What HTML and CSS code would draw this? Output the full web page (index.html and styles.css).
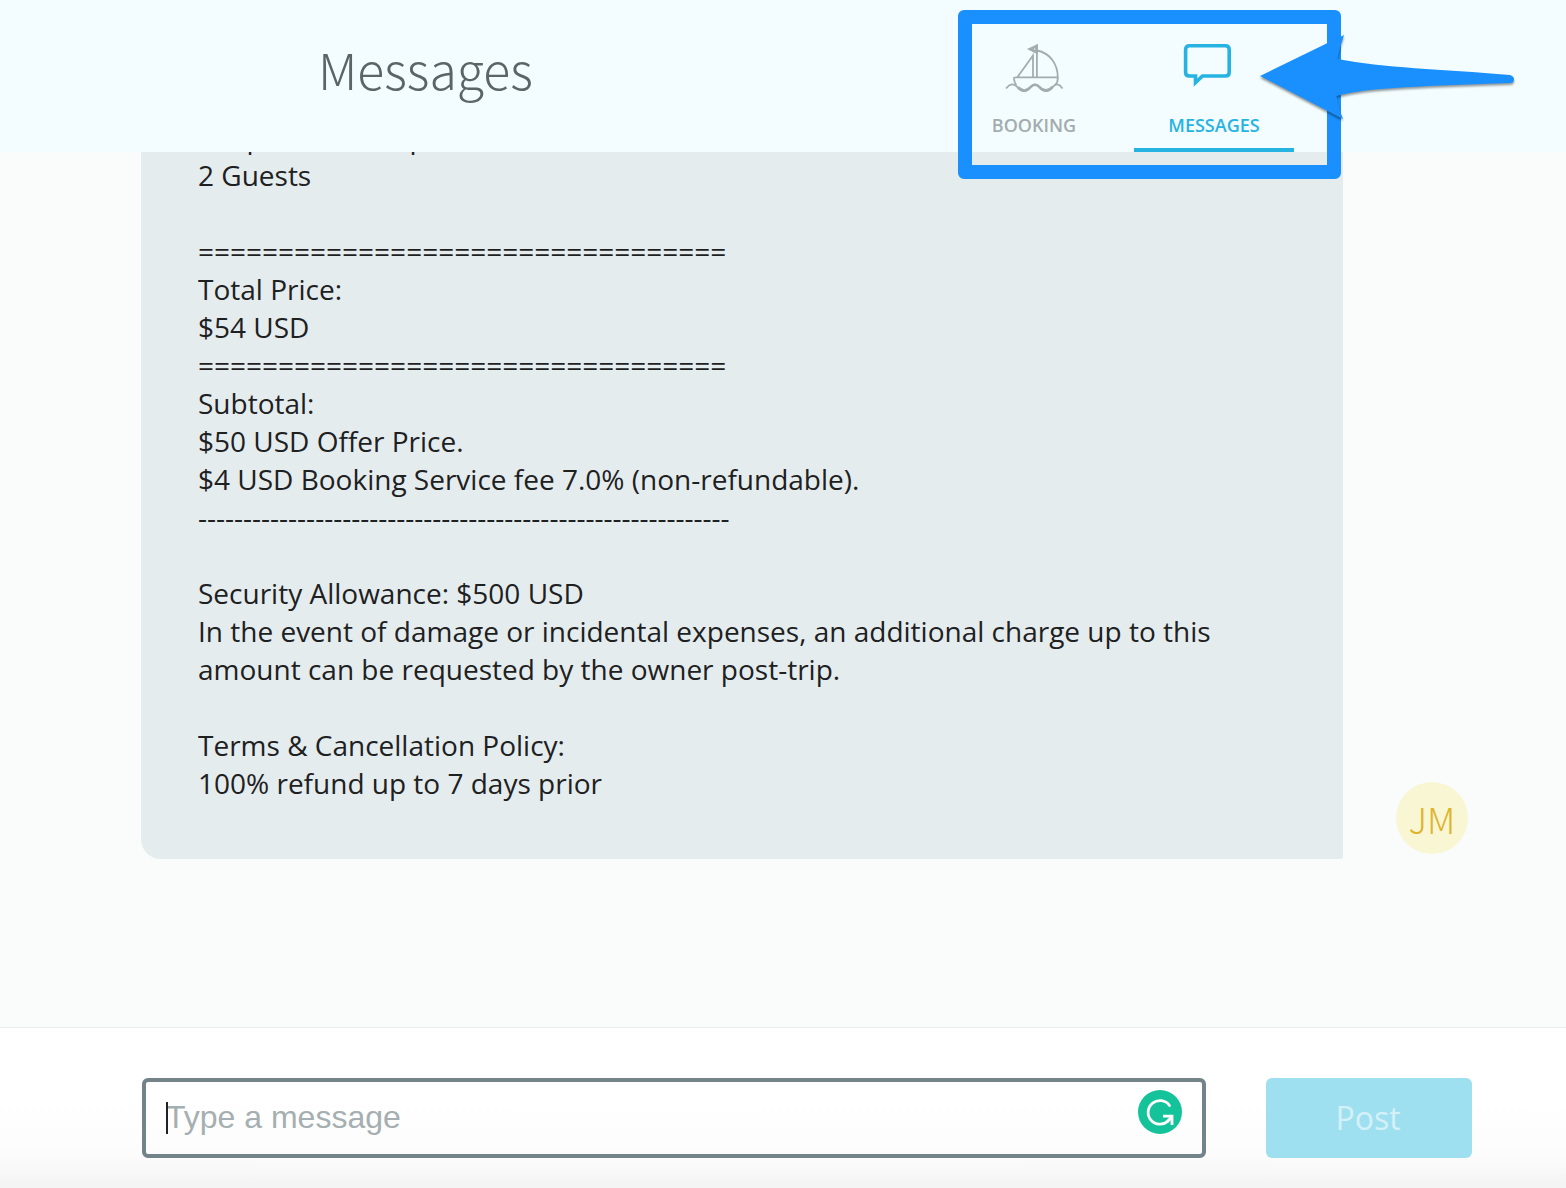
FILE: index.html
```html
<!DOCTYPE html>
<html lang="en">
<head>
<meta charset="utf-8">
<title>Messages</title>
<meta name="viewport" content="width=device-width, initial-scale=1">
<link rel="stylesheet" href="styles.css">
</head>
<body>
<header class="header">
  <h1 class="title">Messages</h1>
  <nav class="tabs">
    <a class="tab" href="#booking">
      <svg class="tab-icon" width="60" height="52" viewBox="-1 0 60 52" fill="none" stroke="currentColor" stroke-width="1.8" aria-hidden="true">
        <path d="M10 36.400H53M28 36V14.500L12.500 36M31.900 36V3.500"/>
        <path d="M24 8L32 4.500V12Z" fill="currentColor"/>
        <path d="M28.500 8L30.200 7.200V9Z" fill="#f3fdff" stroke="none"/>
        <path d="M32 9.500C45 12 53 23 52.800 37C52.800 40 52 42.200 50.500 43.500M9 36C9 40 9.800 42.500 11.500 44"/>
        <path d="M1 47.500C5 42.500 9 42 12.500 46.200C16.500 51.500 21.500 51.500 25.500 46.200C28.500 42.500 31.500 42.500 34.500 46.200C38.500 51.500 43.500 51.500 47.500 46.200C51 42 54 42.500 57.500 47.500"/>
        <path d="M13 46.200C17 50.500 21.500 50.500 25.500 46.200C28.500 43 31.500 43 34.500 46.200C38.500 50.500 43.500 50.500 47.500 45.800" stroke-width="2.600"/>
      </svg>
      <span>BOOKING</span>
    </a>
    <a class="tab tab-active" href="#messages" aria-current="page">
      <svg class="tab-icon tab-icon-chat" width="60" height="52" viewBox="0 0 60 52" fill="none" stroke="currentColor" stroke-width="3.600" aria-hidden="true">
        <path d="M12.400 4.800H48.400Q52.200 4.800 52.200 8.600V31.200Q52.200 35 48.400 35H25.500L18.500 41.500V35H12.400Q8.600 35 8.600 31.200V8.600Q8.600 4.800 12.400 4.800Z"/>
      </svg>
      <span>MESSAGES</span>
    </a>
    <div class="highlight"></div>
    <svg class="arrow" width="264" height="96" viewBox="0 0 264 96" aria-hidden="true">
      <path d="M4 49L88 8C86 15 83 23 81.500 32C127 41 185 42 254 48Q258 49 258 52.500Q258 56 254 56C175 59 112 60 80.500 69C82 77 84 85 87 92Z"/>
    </svg>
  </nav>
</header>

<main class="thread">
  <article class="message">
    <div class="bubble">
      <p>Drop off at 6:00 pm<br>2 Guests</p>
      <p>=================================<br>Total Price:<br>$54 USD<br>=================================<br>Subtotal:<br>$50 USD Offer Price.<br>$4 USD Booking Service fee 7.0% (non-refundable).<br>-----------------------------------------------------------</p>
      <p>Security Allowance: $500 USD<br>In the event of damage or incidental expenses, an additional charge up to this amount can be requested by the owner post-trip.</p>
      <p>Terms &amp; Cancellation Policy:<br>100% refund up to 7 days prior</p>
    </div>
    <div class="avatar">JM</div>
  </article>
</main>

<form class="composer">
  <div class="field">
    <input class="input" type="text" placeholder="Type a message" aria-label="Type a message">
    <span class="caret"></span>
    <svg class="checker" width="44" height="44" viewBox="0 0 44 44" fill="none" stroke="#fff" stroke-width="2.800" aria-hidden="true">
      <circle cx="22" cy="22" r="22" fill="#15c39a" stroke="none"/>
      <path d="M31.500 15.500A11.800 11.800 0 1 0 30 31" stroke-linecap="round"/>
      <path d="M25 26.200H34V35M33.500 27L29 32"/>
    </svg>
  </div>
  <button class="post" type="submit">Post</button>
</form>
</body>
</html>
```
FILE: styles.css
```css
* {
  box-sizing: border-box;
}

body {
  display: flex;
  flex-direction: column;
  height: 100vh;
  margin: 0;
  background: #fafcfb;
  color: #1d2122;
  font-family: "Open Sans", "Noto Sans", sans-serif;
}

.header {
  position: relative;
  z-index: 1;
  display: flex;
  flex: none;
  justify-content: space-between;
  padding: 0 272px 0 318px;
  background: #f3fdff;
}

.title {
  margin: 0;
  color: #5b6567;
  font-family: "Noto Sans CJK SC", "Open Sans", sans-serif;
  font-size: 50px;
  font-weight: 200;
  line-height: 136px;
}

.tabs {
  position: relative;
  display: flex;
  gap: 20px;
}

.tab {
  display: flex;
  flex-direction: column;
  align-items: center;
  gap: 18px;
  width: 160px;
  height: 152px;
  padding-top: 41px;
  border-bottom: 4px solid transparent;
  color: #a3acae;
  font-size: 18px;
  font-weight: 600;
  line-height: 28px;
  text-decoration: none;
}

.tab-active {
  border-color: #27b3e2;
  color: #27b3e2;
}

.tab-icon-chat {
  margin-right: 14px;
}

.highlight {
  position: absolute;
  top: 10px;
  left: 4px;
  width: 383px;
  height: 169px;
  border: 14px solid #1a90ff;
  border-radius: 6px;
  pointer-events: none;
}

.arrow {
  position: absolute;
  top: 27px;
  left: 302px;
  fill: #1a90ff;
  filter: drop-shadow(0 2px 1px rgba(0, 0, 0, 0.4));
  pointer-events: none;
}

.thread {
  display: flex;
  flex: 1;
  flex-direction: column;
  justify-content: flex-end;
  min-height: 0;
  overflow: hidden;
  padding: 0 98px 168px 141px;
}

.message {
  display: flex;
  align-items: flex-end;
  gap: 53px;
}

.bubble {
  flex: 1;
  padding: 57px;
  border-radius: 20px 20px 2px 20px;
  background: #e5ecee;
  font-size: 28px;
  line-height: 38px;
}

.bubble p {
  margin: 0 0 38px;
}

.bubble p:last-child {
  margin-bottom: 0;
}

.avatar {
  width: 72px;
  height: 72px;
  margin-bottom: 5px;
  border-radius: 50%;
  background: #f8f6d3;
  color: #dfb42c;
  font-family: "Noto Sans CJK SC", "Open Sans", sans-serif;
  font-size: 36px;
  font-weight: 200;
  line-height: 72px;
  text-align: center;
}

.composer {
  display: flex;
  flex: none;
  gap: 60px;
  padding: 50px 94px 30px 142px;
  border-top: 1px solid #e9eced;
  background: linear-gradient(#fff 45%, #fcfcfc 80%, #f3f3f3);
}

.field {
  position: relative;
  flex: 1;
}

.input {
  display: block;
  width: 100%;
  height: 80px;
  padding: 0 80px 2px 20px;
  border: 4px solid #728489;
  border-radius: 6px;
  outline: none;
  background: transparent;
  color: #1d2122;
  font-family: "Liberation Sans", Arial, sans-serif;
  font-size: 32px;
}

.input::placeholder {
  color: #a5afb1;
  opacity: 1;
}

.caret {
  position: absolute;
  top: 24px;
  left: 24px;
  width: 2px;
  height: 32px;
  background: #222;
}

.checker {
  position: absolute;
  top: 12px;
  right: 24px;
}

.post {
  width: 206px;
  height: 80px;
  padding: 0 2px 2px 0;
  border: 0;
  border-radius: 6px;
  background: #9ee0f0;
  color: #d5f1f8;
  font-family: "Open Sans", "Noto Sans", sans-serif;
  font-size: 32px;
}
```
